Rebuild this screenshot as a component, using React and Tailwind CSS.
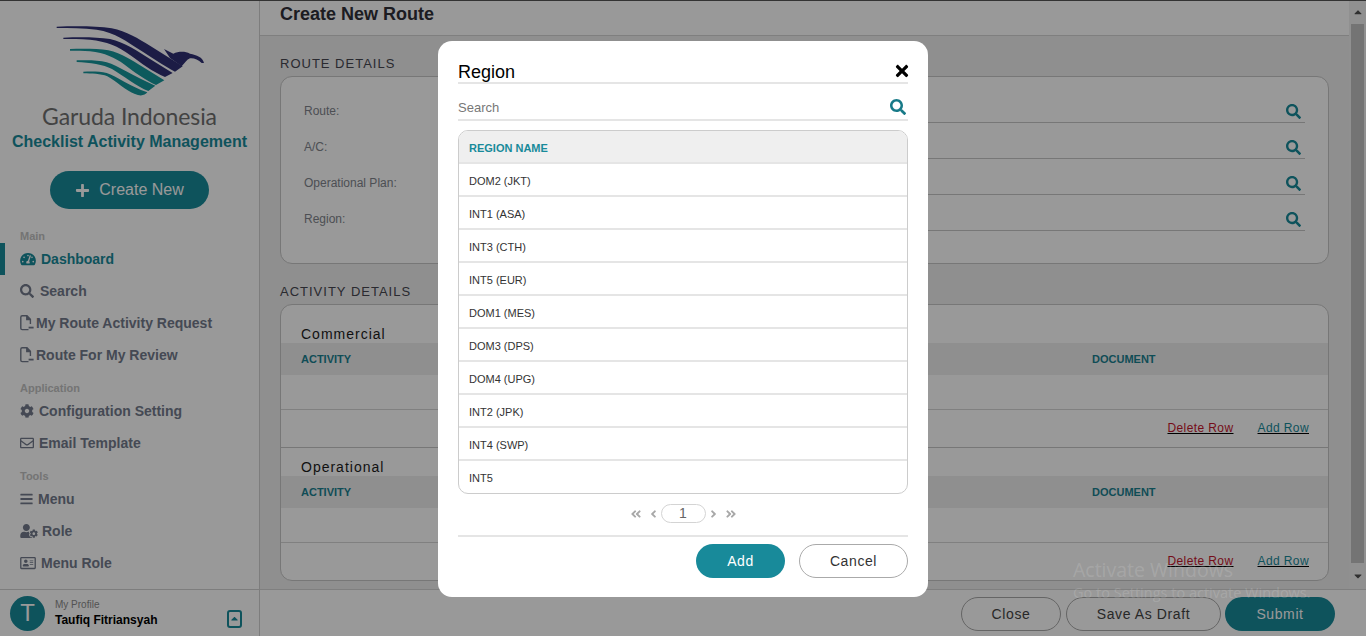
import React from "react";
import {
  FaTachometerAlt, FaSearch, FaCog, FaRegEnvelope, FaBars, FaUserCog, FaRegAddressCard, FaPlus, FaTimes,
  FaAngleDoubleLeft, FaAngleDoubleRight, FaAngleLeft, FaAngleRight, FaCaretUp, FaCaretDown,
} from "react-icons/fa";

function FileIcon() {
  return (
    <svg width="14" height="16" viewBox="0 0 14 16" fill="none" stroke="currentColor" strokeWidth="1.4">
      <path d="M8.5 14.6H2.2A1.4 1.4 0 0 1 .8 13.2V2.2A1.4 1.4 0 0 1 2.2.8H7l3.4 3.4V9" />
      <path d="M6.8 1v3.6h3.6" fill="currentColor" />
      <path d="M8.6 12.6H13.6" strokeWidth="1.8" />
    </svg>
  );
}

function Logo() {
  return (
    <svg className="block ml-[50px] w-[160px] h-[80px]" viewBox="0 0 480 240">
      <g fill="#2f3074">
        <path d="M20 11C80 9 140 9 185 16C230 24 265 48 300 68L398 130L375 146C340 127 300 100 265 78C235 58 195 28 140 20C100 15 60 15 20 15Z" />
        <path d="M40 44C90 42 140 42 180 48C225 58 262 84 300 108L368 150L345 162C310 148 270 118 240 96C205 70 170 55 120 50C90 48 65 48 40 48Z" />
        <path d="M342 78L370 92C385 85 405 84 420 92C440 96 458 102 462 120L455 120C445 110 430 104 420 106C410 110 405 120 395 130L360 105Z" />
      </g>
      <g fill="#16969c">
        <path d="M60 78C100 77 145 77 175 82C215 90 250 115 275 130L343 172L318 186C290 174 250 146 222 124C195 104 165 90 120 85C100 83 80 83 60 83Z" />
        <path d="M80 112C115 111 145 111 170 118C205 128 250 160 316 188L295 204C262 192 220 158 186 138C160 124 120 119 80 117Z" />
        <path d="M100 146C125 145 150 145 170 150C200 160 240 190 292 208C285 218 270 220 255 213C228 204 198 174 172 160C152 152 125 152 100 151Z" />
      </g>
    </svg>
  );
}

function NavItem({ icon, label, active, labelClass }) {
  return (
    <div className={`relative h-[32px] pl-[20px] flex items-center text-[14px] font-bold ${active ? "text-[#188a9a]" : "text-[#737b8c]"}`}>
      {active && <span className="absolute left-0 top-0 h-[32px] w-[5px] bg-[#188a9a]" />}
      {icon}
      <span className={labelClass}>{label}</span>
    </div>
  );
}

function GroupLabel({ children, first }) {
  return <div className={`h-[16px] pl-[20px] text-[11px] font-bold leading-[18px] text-[#c2c2c2] ${first ? "mt-[18px]" : "mt-[8px]"}`}>{children}</div>;
}

function Sidebar() {
  return (
    <aside className="w-[260px] shrink-0 flex flex-col bg-white border-r border-[#d0d0d0]">
      <div className="flex-1 min-h-0">
        <div className="pt-[23px]"><Logo /></div>
        <div className="h-[30px] -mt-[2px] text-center text-[23px] leading-[30px] tracking-[-0.1px] text-[#707070] font-['Lato',sans-serif]">Garuda Indonesia</div>
        <div className="h-[20px] mt-[1px] text-center text-[16px] font-bold leading-[20px] text-[#188a9a]">Checklist Activity Management</div>
        <div className="mt-[19px] ml-[50px] w-[159px] h-[38px] rounded-full bg-[#188a9a] text-white flex items-center justify-center text-[16px]">
          <FaPlus className="w-[15px] h-[15px] mr-[9px]" />Create New
        </div>
        <GroupLabel first>Main</GroupLabel>
        <NavItem active icon={<FaTachometerAlt className="w-[16px] h-[14px]" />} label="Dashboard" labelClass="ml-[5px]" />
        <NavItem icon={<FaSearch className="w-[14px] h-[14px]" />} label="Search" labelClass="ml-[6px]" />
        <NavItem icon={<FileIcon />} label="My Route Activity Request" labelClass="ml-[2px]" />
        <NavItem icon={<FileIcon />} label="Route For My Review" labelClass="ml-[2px]" />
        <GroupLabel>Application</GroupLabel>
        <NavItem icon={<FaCog className="w-[14px] h-[14px]" />} label="Configuration Setting" labelClass="ml-[5px]" />
        <NavItem icon={<FaRegEnvelope className="w-[14px] h-[14px]" />} label="Email Template" labelClass="ml-[5px]" />
        <GroupLabel>Tools</GroupLabel>
        <NavItem icon={<FaBars className="w-[13px] h-[14px]" />} label="Menu" labelClass="ml-[5px]" />
        <NavItem icon={<FaUserCog className="w-[18px] h-[14px]" />} label="Role" labelClass="ml-[4px]" />
        <NavItem icon={<FaRegAddressCard className="w-[16px] h-[14px]" />} label="Menu Role" labelClass="ml-[5px]" />
      </div>
      <div className="h-[47px] shrink-0 border-t border-[#d0d0d0] pl-[10px] flex items-center">
        <div className="w-[35px] h-[35px] rounded-full bg-[#188a9a] text-white flex items-center justify-center text-[24px]">T</div>
        <div className="ml-[10px] mt-[2px] flex flex-col">
          <span className="text-[10px] leading-[12px] text-[#8a8a8a]">My Profile</span>
          <span className="text-[12px] font-bold leading-[18px] text-black">Taufiq Fitriansyah</span>
        </div>
        <div className="ml-[70px] mt-[11px] w-[15px] h-[18px] rounded-[3px] border-2 border-[#188a9a] flex items-center justify-center text-[#188a9a]">
          <FaCaretUp className="w-[11px] h-[11px]" />
        </div>
      </div>
    </aside>
  );
}

function Field({ label }) {
  return (
    <div className="h-[36px] flex items-end pl-[23px] pr-[23px]">
      <div className="w-[176px] pb-[4px] text-[12px] leading-[16px] text-[#80848c]">{label}</div>
      <div className="flex-1 h-[36px] flex items-end justify-end border-b border-[#c6c6c6] pb-[3px] pr-[4px]">
        <FaSearch className="w-[15px] h-[15px] text-[#188a9a]" />
      </div>
    </div>
  );
}

function ActivityTable() {
  return (
    <>
      <div className="h-[32px] bg-[#eeeeee] flex items-center pl-[20px] text-[11px] font-bold text-[#1a8090]">
        <span className="w-[791px]">ACTIVITY</span>
        <span>DOCUMENT</span>
      </div>
      <div className="h-[35px] border-b border-[#d6d6d6]" />
      <div className="h-[37px] pb-[1px] flex items-center justify-end pr-[19px] gap-[24px] text-[12px] tracking-[0.4px] underline">
        <span className="text-[#c4162c]">Delete Row</span>
        <span className="text-[#188a9a]">Add Row</span>
      </div>
    </>
  );
}

function Content() {
  return (
    <div className="flex-1 min-w-0 bg-[#eeeeee] overflow-hidden">
      <div className="h-[36px] bg-white border-b border-[#d4d4d4] pl-[20px] flex items-center">
        <h1 className="text-[18px] font-bold text-[#2f2f38] -mt-[6px]">Create New Route</h1>
      </div>
      <div className="px-[20px]">
        <h2 className="mt-[17px] h-[20px] text-[13px] leading-[22px] tracking-[1px] text-[#464650]">ROUTE DETAILS</h2>
        <div className="mt-[3px] h-[188px] rounded-[12px] border border-[#c6c6c6] bg-white pt-[10px]">
          <Field label="Route:" />
          <Field label="A/C:" />
          <Field label="Operational Plan:" />
          <Field label="Region:" />
        </div>
        <h2 className="mt-[17px] h-[20px] text-[13px] leading-[22px] tracking-[1px] text-[#464650]">ACTIVITY DETAILS</h2>
        <div className="mt-[3px] rounded-[12px] border border-[#c6c6c6] bg-white overflow-hidden">
          <div className="pt-[20px] h-[38px] pl-[20px] text-[14px] leading-[18px] tracking-[1px] text-[#1c1c1c]">Commercial</div>
          <ActivityTable />
          <div className="border-t border-[#c6c6c6]" />
          <div className="pt-[10px] h-[28px] pl-[20px] text-[14px] leading-[18px] tracking-[1px] text-[#1c1c1c]">Operational</div>
          <ActivityTable />
        </div>
      </div>
    </div>
  );
}

function Scrollbar() {
  return (
    <div className="w-[17px] shrink-0 bg-[#f1f1f1] flex flex-col items-center">
      <div className="h-[24px] flex items-center justify-center text-[#505050]"><FaCaretUp className="w-[12px] h-[12px]" /></div>
      <div className="w-[13px] h-[539px] bg-[#c1c1c1]" />
      <div className="flex-1 flex items-center justify-center text-[#505050]"><FaCaretDown className="w-[12px] h-[12px]" /></div>
    </div>
  );
}

function Footer() {
  return (
    <div className="h-[47px] shrink-0 bg-white border-t border-[#d4d4d4] pt-[7px] pr-[31px] flex justify-end text-[14px] tracking-[0.6px]">
      <div className="w-[100px] h-[34px] rounded-full border border-[#a8a8a8] text-[#444] flex items-center justify-center">Close</div>
      <div className="ml-[5px] w-[155px] h-[34px] rounded-full border border-[#a8a8a8] text-[#444] flex items-center justify-center">Save As Draft</div>
      <div className="ml-[4px] w-[110px] h-[34px] rounded-full bg-[#188a9a] text-white flex items-center justify-center">Submit</div>
    </div>
  );
}

const regions = ["DOM2 (JKT)", "INT1 (ASA)", "INT3 (CTH)", "INT5 (EUR)", "DOM1 (MES)", "DOM3 (DPS)", "DOM4 (UPG)", "INT2 (JPK)", "INT4 (SWP)", "INT5"];

function Modal() {
  return (
    <div className="w-[490px] h-[556px] rounded-[14px] bg-white px-[20px]">
      <div className="h-[43px] flex items-end justify-between border-b-2 border-[#e5e5e5]">
        <span className="text-[18px] leading-[22px] -mb-[1px] text-black">Region</span>
        <FaTimes className="w-[18px] h-[18px] text-black mb-[2px] -mr-[3px]" />
      </div>
      <div className="h-[37px] flex items-end justify-between border-b-2 border-[#e5e5e5] pr-[2px] pb-[4px]">
        <span className="text-[13px] leading-[16px] -mb-[1px] text-[#777777]">Search</span>
        <FaSearch className="w-[16px] h-[16px] text-[#187a88]" />
      </div>
      <div className="mt-[9px] h-[364px] rounded-[10px] border border-[#cccccc] overflow-hidden">
        <div className="h-[33px] bg-[#efefef] border-b-2 border-[#e5e5e5] pl-[10px] pt-[3px] flex items-center text-[11px] font-bold text-[#188a9a]">REGION NAME</div>
        {regions.map((r, i) => (
          <div key={i} className={`h-[33px] pl-[10px] flex items-center text-[11px] text-[#333333] ${i < regions.length - 1 ? "pt-[3px] border-b-2 border-[#e5e5e5]" : "pt-[1px]"}`}>{r}</div>
        ))}
      </div>
      <div className="mt-[10px] h-[19px] flex items-center justify-center text-[#a8a8a8]">
        <FaAngleDoubleLeft className="w-[12px] h-[12px]" />
        <FaAngleLeft className="ml-[7px] w-[9px] h-[12px]" />
        <div className="ml-[3px] w-[45px] h-[19px] rounded-full border border-[#d4d4d4] flex items-center justify-center text-[14px] text-[#666666]">1</div>
        <FaAngleRight className="ml-[3px] w-[9px] h-[12px]" />
        <FaAngleDoubleRight className="ml-[7px] w-[12px] h-[12px]" />
      </div>
      <div className="mt-[12px] border-t-2 border-[#e5e5e5]" />
      <div className="mt-[7px] flex justify-end text-[14px] tracking-[0.6px]">
        <div className="w-[89px] h-[34px] rounded-full bg-[#188a9a] text-white flex items-center justify-center">Add</div>
        <div className="ml-[14px] w-[109px] h-[34px] rounded-full border border-[#aaaaaa] text-[#333333] flex items-center justify-center">Cancel</div>
      </div>
    </div>
  );
}

export default function App() {
  return (
    <div className="relative h-screen overflow-hidden flex flex-col font-['Liberation_Sans',Arial,sans-serif]">
      <div className="flex-1 min-h-0 flex">
        <Sidebar />
        <div className="flex-1 min-w-0 flex flex-col">
          <div className="flex-1 min-h-0 flex">
            <Content />
            <Scrollbar />
          </div>
          <Footer />
        </div>
      </div>
      <div className="absolute inset-0 bg-black/40 border-t border-[#333333] flex justify-center pt-[40px]">
        <Modal />
      </div>
      <div className="absolute left-[1073px] top-[557px] text-white/15 font-['Open_Sans',sans-serif] whitespace-nowrap">
        <div className="text-[19.5px] leading-[26px]">Activate Windows</div>
        <div className="text-[14.5px] leading-[20px]">Go to Settings to activate Windows.</div>
      </div>
    </div>
  );
}
